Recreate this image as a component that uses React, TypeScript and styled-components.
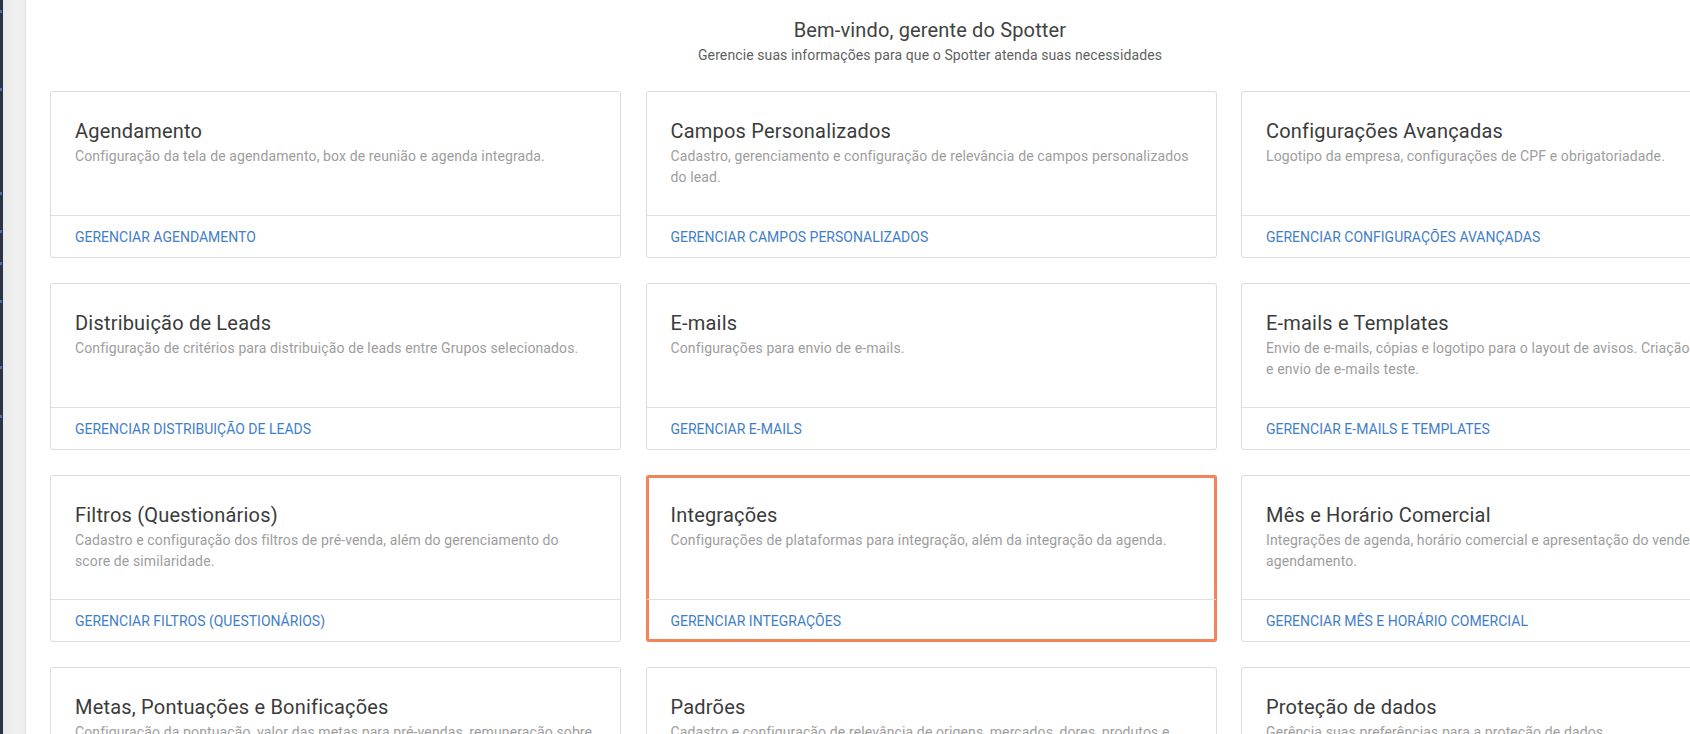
import React from 'react';
import styled, {createGlobalStyle, css} from 'styled-components';

const GlobalStyle = createGlobalStyle`
    html, body {
        margin: 0;
        padding: 0;
        background: #fff;
        overflow: hidden;
    }
    body {
        font-family: Roboto, "Liberation Sans", Arial, sans-serif;
        -webkit-font-smoothing: antialiased;
    }
    * {
        box-sizing: border-box;
    }
`;

const Layout = styled.div`
    display: flex;
    height: 734px;
    width: 1690px;
    overflow: hidden;
`;

const Sidebar = styled.div`
    position: relative;
    flex: 0 0 26px;
    height: 100%;
    display: flex;
`;

const SidebarDark = styled.div`
    flex: 0 0 3px;
    background: #2b3444;
`;

const SidebarShade = styled.div`
    flex: 1;
    background: linear-gradient(to right, #e9e9e9 0%, #f1f1f1 60%, #ececec 100%);
    border-right: 1px solid #e2e2e2;
`;

const NavDot = styled.span<{ $top: number }>`
    position: absolute;
    left: 0;
    top: ${p => p.$top}px;
    width: 2px;
    height: 3px;
    background: #4a6fb5;
`;

const Main = styled.main`
    flex: 0 0 1808px;
    padding: 16px 24px 0;
`;

const Header = styled.header`
    text-align: center;
`;

const Title = styled.h1`
    margin: 0;
    font-size: 20px;
    line-height: 28px;
    font-weight: 400;
    letter-spacing: 0.15px;
    color: #424242;
`;

const Subtitle = styled.p`
    margin: 0;
    font-size: 14px;
    line-height: 22px;
    letter-spacing: 0.1px;
    color: #5f5f5f;
`;

// third column runs past the window edge
const Grid = styled.section`
    display: grid;
    grid-template-columns: 571px 571px 540px;
    column-gap: 24.5px;
    row-gap: 25px;
    margin-top: 25px;
`;

const Card = styled.article<{ $active?: boolean }>`
    height: 167px;
    display: flex;
    flex-direction: column;
    background: #fff;
    border: 1px solid #dcdcdc;
    border-radius: 3px;

    ${p => p.$active && css`
        border-color: #f3845a;
        border-radius: 2px;
        box-shadow: inset 0 0 0 2px #f3845a;
    `}
`;

const CardBody = styled.div`
    flex: 0 0 123px;
    padding: 24px 24px 0;
    overflow: hidden;
`;

const CardTitle = styled.h2`
    margin: 0;
    font-size: 20px;
    line-height: 30px;
    font-weight: 400;
    letter-spacing: 0.2px;
    color: #3b3b3b;
    white-space: nowrap;
`;

const CardText = styled.p`
    margin: 0;
    font-size: 14px;
    line-height: 21px;
    letter-spacing: 0.12px;
    color: #9d9d9d;
    white-space: pre-line;
`;

const CardFooter = styled.div`
    flex: 1;
    display: flex;
    align-items: center;
    padding: 0 24px;
    border-top: 1px solid #e0e0e0;
`;

const CardLink = styled.a`
    font-size: 14px;
    color: #3f7ec8;
    text-decoration: none;
    text-transform: uppercase;
    cursor: pointer;
    white-space: nowrap;
`;

const items = [
    {
        title: 'Agendamento',
        text: 'Configuração da tela de agendamento, box de reunião e agenda integrada.',
        link: 'Gerenciar Agendamento',
    },
    {
        title: 'Campos Personalizados',
        text: 'Cadastro, gerenciamento e configuração de relevância de campos personalizados do lead.',
        link: 'Gerenciar Campos Personalizados',
    },
    {
        title: 'Configurações Avançadas',
        text: 'Logotipo da empresa, configurações de CPF e obrigatoriadade.',
        link: 'Gerenciar Configurações Avançadas',
    },
    {
        title: 'Distribuição de Leads',
        text: 'Configuração de critérios para distribuição de leads entre Grupos selecionados.',
        link: 'Gerenciar Distribuição de Leads',
    },
    {
        title: 'E-mails',
        text: 'Configurações para envio de e-mails.',
        link: 'Gerenciar E-mails',
    },
    {
        title: 'E-mails e Templates',
        text: 'Envio de e-mails, cópias e logotipo para o layout de avisos. Criação\ne envio de e-mails teste.',
        link: 'Gerenciar E-mails e Templates',
    },
    {
        title: 'Filtros (Questionários)',
        text: 'Cadastro e configuração dos filtros de pré-venda, além do gerenciamento do score de similaridade.',
        link: 'Gerenciar Filtros (Questionários)',
    },
    {
        title: 'Integrações',
        text: 'Configurações de plataformas para integração, além da integração da agenda.',
        link: 'Gerenciar Integrações',
        active: true,
    },
    {
        title: 'Mês e Horário Comercial',
        text: 'Integrações de agenda, horário comercial e apresentação do vendedor no agendamento.',
        link: 'Gerenciar Mês e Horário Comercial',
    },
    {
        title: 'Metas, Pontuações e Bonificações',
        text: 'Configuração da pontuação, valor das metas para pré-vendas, remuneração sobre vendas e bonificações.',
        link: 'Gerenciar Metas, Pontuações e Bonificações',
    },
    {
        title: 'Padrões',
        text: 'Cadastro e configuração de relevância de origens, mercados, dores, produtos e motivos.',
        link: 'Gerenciar Padrões',
    },
    {
        title: 'Proteção de dados',
        text: 'Gerência suas preferências para a proteção de dados.',
        link: 'Gerenciar Proteção de dados',
    },
];

const navDots = [10, 88, 192, 230, 262, 300, 366, 415];

const App = () => {
    return (
        <>
            <GlobalStyle/>
            <Layout>
                <Sidebar>
                    <SidebarDark/>
                    <SidebarShade/>
                    {navDots.map(top => <NavDot key={top} $top={top}/>)}
                </Sidebar>
                <Main>
                    <Header>
                        <Title>Bem-vindo, gerente do Spotter</Title>
                        <Subtitle>Gerencie suas informações para que o Spotter atenda suas necessidades</Subtitle>
                    </Header>
                    <Grid>
                        {items.map(item => (
                            <Card key={item.title} $active={item.active}>
                                <CardBody>
                                    <CardTitle>{item.title}</CardTitle>
                                    <CardText>{item.text}</CardText>
                                </CardBody>
                                <CardFooter>
                                    <CardLink>{item.link}</CardLink>
                                </CardFooter>
                            </Card>
                        ))}
                    </Grid>
                </Main>
            </Layout>
        </>
    );
};

export default App;
